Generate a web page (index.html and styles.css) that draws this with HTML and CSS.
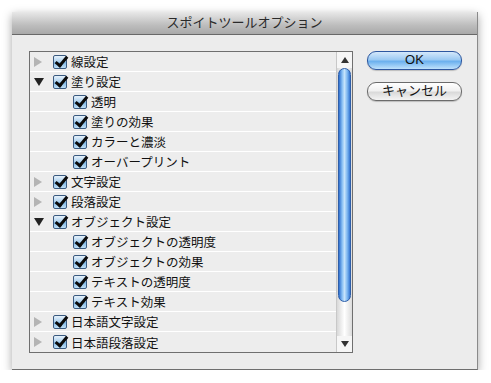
FILE: index.html
```html
<!DOCTYPE html>
<html>
<head>
<meta name="viewport" content="width=device-width, initial-scale=1">
<link rel="stylesheet" href="styles.css">
</head>
<body>

<div class="window">
  <div class="titlebar">スポイトツールオプション</div>
  <div class="content">
    <div class="listbox">
      <div class="rows">
        <div class="row"><span class="tri closed"></span><span class="check"></span>線設定</div>
        <div class="row"><span class="tri open"></span><span class="check"></span>塗り設定</div>
        <div class="row child"><span class="check"></span>透明</div>
        <div class="row child"><span class="check"></span>塗りの効果</div>
        <div class="row child"><span class="check"></span>カラーと濃淡</div>
        <div class="row child"><span class="check"></span>オーバープリント</div>
        <div class="row"><span class="tri closed"></span><span class="check"></span>文字設定</div>
        <div class="row"><span class="tri closed"></span><span class="check"></span>段落設定</div>
        <div class="row"><span class="tri open"></span><span class="check"></span>オブジェクト設定</div>
        <div class="row child"><span class="check"></span>オブジェクトの透明度</div>
        <div class="row child"><span class="check"></span>オブジェクトの効果</div>
        <div class="row child"><span class="check"></span>テキストの透明度</div>
        <div class="row child"><span class="check"></span>テキスト効果</div>
        <div class="row"><span class="tri closed"></span><span class="check"></span>日本語文字設定</div>
        <div class="row last"><span class="tri closed"></span><span class="check"></span>日本語段落設定</div>
      </div>
      <div class="scrollbar">
        <div class="arrow up"></div>
        <div class="track">
          <div class="thumb"></div>
        </div>
        <div class="arrow down"></div>
      </div>
    </div>
    <div class="buttons">
      <div class="button default">OK</div>
      <div class="button">キャンセル</div>
    </div>
  </div>
</div>

</body>
</html>
```

FILE: styles.css
```css
body {
  margin: 0;
  background: #ffffff;
  font-family: "Liberation Sans", "Noto Sans CJK JP", sans-serif;
}

.window {
  margin: 12px 0 0 12px;
  width: 465px;
  height: 357px;
  background: #ececec;
  border-right: 1px solid #8a8a8a;
  border-bottom: 1px solid #6e6e6e;
  box-shadow: 0 3px 9px rgba(0, 0, 0, 0.35);
  display: flex;
  flex-direction: column;
}

.titlebar {
  height: 22px;
  line-height: 22px;
  text-align: center;
  font-size: 13px;
  color: #2a2a2a;
  background: linear-gradient(#e8e8e8, #bdbdbd 60%, #a9a9a9);
  border-bottom: 1px solid #686868;
}

.content {
  display: flex;
  padding: 16px 15px 0 17px;
  gap: 14px;
}

.listbox {
  width: 322px;
  height: 300px;
  border: 1px solid #6f6f6f;
  display: flex;
  background: #ededed;
}

.rows {
  flex: 1;
}

.row {
  height: 19px;
  border-bottom: 1px solid #ffffff;
  display: flex;
  align-items: center;
  font-size: 12.5px;
  color: #111;
  padding-left: 4px;
}

.row.last {
  border-bottom: none;
  height: 20px;
}

.row.child {
  padding-left: 43px;
}

.tri {
  width: 0;
  height: 0;
}

.tri.closed {
  margin-right: 11px;
  border-top: 5px solid transparent;
  border-bottom: 5px solid transparent;
  border-left: 8px solid #b4b4b4;
}

.tri.open {
  border-left: 5px solid transparent;
  border-right: 5px solid transparent;
  border-top: 8px solid #222;
  margin-top: 1px;
  margin-right: 9px;
}

.check {
  width: 12px;
  height: 12px;
  border: 1px solid #3a5a80;
  border-radius: 2px;
  background: linear-gradient(#e7f2fb, #a9cfee 50%, #7db7e6 51%, #bfe0f8);
  margin-right: 4px;
  position: relative;
}

.check::after {
  content: "";
  position: absolute;
  left: 4px;
  top: -2px;
  width: 4px;
  height: 10px;
  border-right: 3px solid #0c0c0c;
  border-bottom: 3px solid #0c0c0c;
  transform: rotate(40deg);
}

.scrollbar {
  width: 15px;
  border-left: 1px solid #c8c8c8;
  background: #f6f6f6;
  display: flex;
  flex-direction: column;
}

.arrow {
  height: 16px;
  position: relative;
}

.arrow::after {
  content: "";
  position: absolute;
  left: 4px;
  width: 0;
  height: 0;
  border-left: 4px solid transparent;
  border-right: 4px solid transparent;
}

.arrow.up::after {
  top: 5px;
  border-bottom: 6px solid #333;
}

.arrow.down::after {
  top: 5px;
  border-top: 6px solid #333;
}

.track {
  flex: 1;
  background: linear-gradient(90deg, #d8d8d8, #ffffff 50%, #dcdcdc);
  padding: 0 1px;
}

.thumb {
  height: 232px;
  border-radius: 7px;
  background: linear-gradient(90deg, #2d6fcf, #8cc1f4 30%, #c6e3fb 50%, #7db6f0 75%, #3575d2);
  border: 1px solid #2e5ea8;
}

.buttons {
  display: flex;
  flex-direction: column;
  gap: 12px;
}

.button {
  width: 93px;
  height: 17px;
  line-height: 16px;
  text-align: center;
  font-size: 13px;
  color: #111;
  border: 1px solid #6b6b6b;
  border-radius: 9px;
  background: linear-gradient(#ffffff, #f1f1f1 45%, #dadada 55%, #f4f4f4);
  box-shadow: 0 1px 1px rgba(0, 0, 0, 0.2);
}

.button.default {
  border-color: #2d57a0;
  background: linear-gradient(#d4e8fb, #9ccaf3 45%, #6bb0ee 55%, #bfe2fc);
}
```
